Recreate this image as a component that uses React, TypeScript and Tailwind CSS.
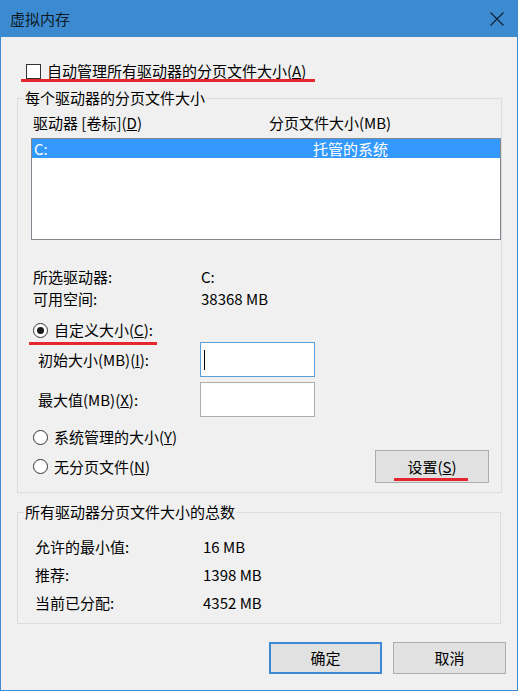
const FONT = 'font-["Noto_Sans_CJK_SC","Noto_Sans",sans-serif]'

function RedMark({ className }: { className: string }) {
  return <span className={`absolute h-[3px] bg-[#e5262f] ${className}`} />
}

function Radio({ checked }: { checked?: boolean }) {
  return (
    <span className="flex h-[15px] w-[15px] shrink-0 items-center justify-center rounded-full border border-[#333] bg-white">
      {checked && <span className="h-[7px] w-[7px] rounded-full bg-[#1a1a1a]" />}
    </span>
  )
}

function Button({ label, isDefault }: { label: React.ReactNode; isDefault?: boolean }) {
  return (
    <div
      className={`flex h-[32px] w-[113px] items-center justify-center bg-[#e1e1e1] ${
        isDefault ? 'border-2 border-[#3d8ad2]' : 'border border-[#adadad]'
      }`}
    >
      {label}
    </div>
  )
}

function InfoRow({ label, value, h }: { label: string; value: string; h: string }) {
  return (
    <div className={`flex items-center ${h}`}>
      <span className="w-[168px]">{label}</span>
      <span>{value}</span>
    </div>
  )
}

export default function App() {
  return (
    <div className={`h-[693px] w-[518px] bg-white text-[15px] leading-[20px] text-black ${FONT}`}>
      <div className="flex h-[691px] flex-col border-x border-b border-[#3c8bd0] bg-[#f0f0f0]">
        {/* title bar */}
        <div className="flex h-[37px] shrink-0 items-center justify-between bg-[#3c8bd0] pl-[9px] pr-[12px]">
          <span className="text-[#0f1a26]">虚拟内存</span>
          <svg width="16" height="16" viewBox="0 0 16 16" className="mt-[1px]">
            <path d="M1.5 1.5 L14.5 14.5 M14.5 1.5 L1.5 14.5" stroke="#14253a" strokeWidth="1.3" fill="none" />
          </svg>
        </div>

        <div className="flex flex-col px-[16px]">
          {/* auto manage */}
          <div className="relative mt-[24px] flex h-[20px] items-center pl-[9px]">
            <span className="h-[15px] w-[15px] border border-[#333] bg-white" />
            <span className="ml-[6px]">
              自动管理所有驱动器的分页文件大小(<u>A</u>)
            </span>
            <RedMark className="left-[4px] top-[18px] w-[294px]" />
          </div>

          {/* per-drive group */}
          <fieldset className="mt-[7px] border border-[#dcdcdc] pb-[9px] pl-[13px]">
            <legend className="-ml-[7px] px-[1px] leading-[20px]">每个驱动器的分页文件大小</legend>

            <div className="mt-[5px] flex h-[20px] items-center pl-[2px]">
              <span className="w-[236px]">
                驱动器 [卷标](<u>D</u>)
              </span>
              <span>分页文件大小(MB)</span>
            </div>

            <div className="mt-[5px] h-[102px] w-[470px] border border-[#828790] bg-white">
              <div className="flex h-[19px] items-center bg-[#3399ff] pl-[2px] text-white">
                <span className="w-[279px]">C:</span>
                <span>托管的系统</span>
              </div>
            </div>

            <div className="mt-[26px] pl-[2px]">
              <InfoRow label="所选驱动器:" value="C:" h="h-[22px]" />
              <InfoRow label="可用空间:" value="38368 MB" h="h-[22px]" />
            </div>

            <div className="relative mt-[10px] flex h-[20px] items-center pl-[2px]">
              <Radio checked />
              <span className="ml-[6px]">
                自定义大小(<u>C</u>):
              </span>
              <RedMark className="left-[-2px] top-[22px] w-[128px]" />
            </div>

            <div className="mt-[2px] flex h-[35px] items-center pl-[7px]">
              <span className="w-[162px]">
                初始大小(MB)(<u>I</u>):
              </span>
              <div className="flex h-[35px] w-[115px] items-center border border-[#5a9fd8] bg-white pl-[3px]">
                <span className="h-[20px] w-px bg-black" />
              </div>
            </div>

            <div className="mt-[5px] flex h-[35px] items-center pl-[7px]">
              <span className="w-[162px]">
                最大值(MB)(<u>X</u>):
              </span>
              <div className="h-[35px] w-[115px] border border-[#adadad] bg-white" />
            </div>

            <div className="mt-[10px] flex h-[20px] items-center pl-[2px]">
              <Radio />
              <span className="ml-[6px]">
                系统管理的大小(<u>Y</u>)
              </span>
            </div>

            <div className="mt-[3px] flex h-[33px] items-center pl-[2px]">
              <Radio />
              <span className="ml-[6px]">
                无分页文件(<u>N</u>)
              </span>
              <div className="relative ml-auto mr-[12px] flex h-[33px] w-[114px] items-center justify-center border border-[#adadad] bg-[#e1e1e1]">
                <span>
                  设置(<u>S</u>)
                </span>
                <RedMark className="left-[18px] top-[27px] w-[74px]" />
              </div>
            </div>
          </fieldset>

          {/* totals group */}
          <fieldset className="mt-[9px] border border-[#dcdcdc] pb-[6px] pl-[17px]">
            <legend className="-ml-[11px] px-[1px] leading-[20px]">所有驱动器分页文件大小的总数</legend>
            <div className="mt-[11px]">
              <InfoRow label="允许的最小值:" value="16 MB" h="h-[28px]" />
              <InfoRow label="推荐:" value="1398 MB" h="h-[28px]" />
              <InfoRow label="当前已分配:" value="4352 MB" h="h-[28px]" />
            </div>
          </fieldset>

          <div className="-mr-[5px] mt-[18px] flex justify-end gap-[11px]">
            <Button label="确定" isDefault />
            <Button label="取消" />
          </div>
        </div>
      </div>
    </div>
  )
}
